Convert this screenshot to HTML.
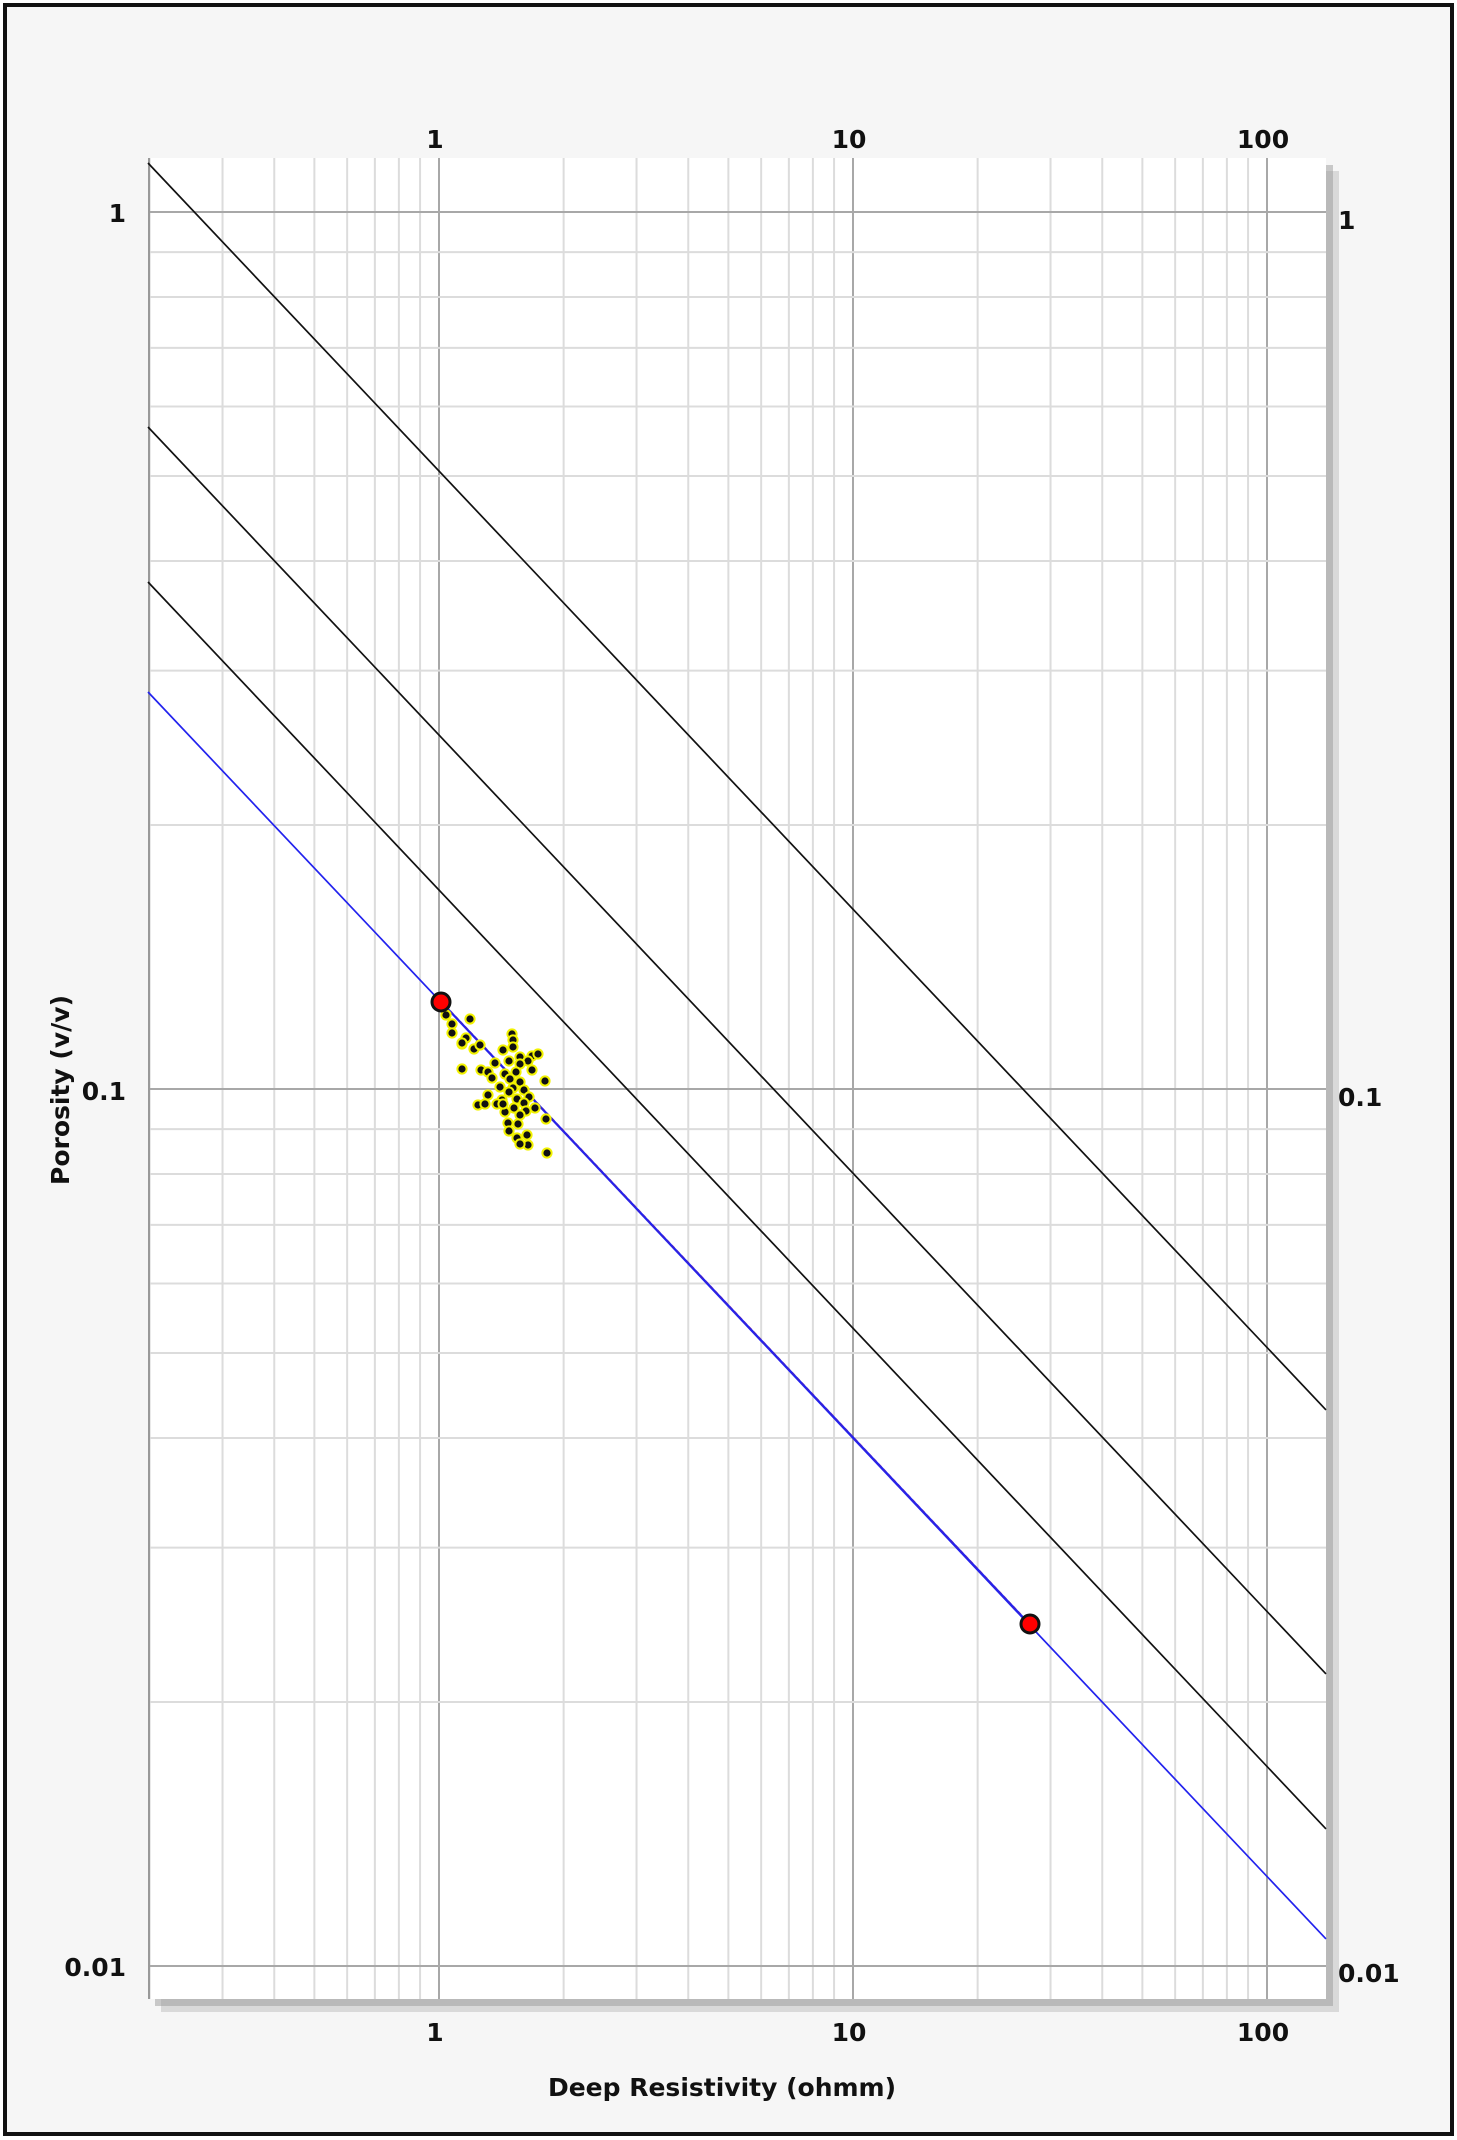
<!DOCTYPE html>
<html><head><meta charset="utf-8"><style>
html,body{margin:0;padding:0;width:1457px;height:2140px;background:#fff;overflow:hidden}
svg{display:block}
text{font-family:"DejaVu Sans","Liberation Sans",sans-serif;font-weight:bold;fill:#111}
</style></head><body>
<svg id="s" width="1457" height="2140" xmlns="http://www.w3.org/2000/svg">
<rect x="5" y="5" width="1447" height="2129" fill="#f6f6f6" stroke="#111" stroke-width="4"/>
<rect x="161" y="171" width="1178" height="1841" fill="#bbb" opacity="0.5"/>
<rect x="155" y="165" width="1178" height="1841" fill="#999" opacity="0.5"/>
<rect x="148" y="158" width="1178" height="1841" fill="#fff"/>
<g id="grid"></g>
<g id="lines"></g>
<text x="435" y="148" font-size="25" text-anchor="middle">1</text>
<text x="849" y="148" font-size="25" text-anchor="middle">10</text>
<text x="1263" y="148" font-size="25" text-anchor="middle">100</text>
<text x="435" y="2041" font-size="25" text-anchor="middle">1</text>
<text x="849" y="2041" font-size="25" text-anchor="middle">10</text>
<text x="1263" y="2041" font-size="25" text-anchor="middle">100</text>
<text x="126" y="222" font-size="25" text-anchor="end">1</text>
<text x="126" y="1100" font-size="25" text-anchor="end">0.1</text>
<text x="126" y="1976" font-size="25" text-anchor="end">0.01</text>
<text x="1338" y="229" font-size="25">1</text>
<text x="1338" y="1106" font-size="25">0.1</text>
<text x="1338" y="1982" font-size="25">0.01</text>
<text x="722" y="2096" font-size="25" text-anchor="middle">Deep Resistivity (ohmm)</text>
<text transform="translate(69,1090) rotate(-90)" font-size="25" text-anchor="middle">Porosity (v/v)</text>
</svg>
<script>
var NS="http://www.w3.org/2000/svg";
function el(p,t,a){var e=document.createElementNS(NS,t);for(var k in a)e.setAttribute(k,a[k]);p.appendChild(e);return e;}
var g=document.getElementById('grid'),L=document.getElementById('lines');
var X0=439,DX=414,Y0=212,DY=877,l=148,r=1326,t=158,b=1999;
function px(v){return X0+Math.log10(v)*DX}
function py(v){return Y0-Math.log10(v)*DY}
[0.1,1,10,100].forEach(function(d){for(var i=1;i<10;i++){var x=px(d*i);if(x<l||x>r)continue;
el(g,'line',{x1:x,x2:x,y1:t,y2:b,stroke:i==1?'#a8a8a8':'#dcdcdc','stroke-width':2});}});
[0.01,0.1,1].forEach(function(d){for(var i=1;i<10;i++){var y=py(d*i);if(y<t||y>b)continue;
el(g,'line',{x1:l,x2:r,y1:y,y2:y,stroke:i==1?'#a8a8a8':'#dcdcdc','stroke-width':2});}});
el(g,'line',{x1:l+1,x2:l+1,y1:t,y2:b,stroke:'#999','stroke-width':2});
var s=1.0585;
[[163,'#111'],[427,'#111'],[582,'#111'],[692,'#2222ee']].forEach(function(a){
el(L,'line',{x1:l,y1:a[0],x2:r,y2:a[0]+s*(r-l),stroke:a[1],'stroke-width':1.7});});
el(L,'line',{x1:441,y1:1001,x2:1030,y2:1624,stroke:'#d22','stroke-width':1.5,'stroke-dasharray':'4 3',opacity:0.7});
el(L,'line',{x1:441,y1:1001,x2:1030,y2:1624,stroke:'#2222ee','stroke-width':1.2});
var pts=[[446,1015],[452,1024],[470,1019],[452,1033],[466,1038],[462,1044],[474,1049],[480,1045],[462,1043],[512,1034],[513,1040],[513,1047],[503,1050],[520,1057],[532,1056],[538,1054],[528,1061],[520,1064],[509,1061],[495,1063],[481,1070],[462,1069],[488,1072],[505,1074],[516,1072],[532,1070],[492,1078],[500,1087],[510,1079],[520,1082],[545,1081],[488,1095],[502,1100],[513,1088],[524,1090],[529,1097],[517,1099],[509,1092],[497,1104],[505,1112],[514,1108],[524,1103],[478,1105],[485,1104],[503,1104],[526,1111],[535,1108],[520,1115],[518,1124],[508,1123],[546,1119],[509,1131],[517,1138],[527,1135],[528,1145],[520,1144],[547,1153]];
pts.forEach(function(p){el(L,'circle',{cx:p[0],cy:p[1],r:4.6,fill:'#111',stroke:'#f2f200','stroke-width':2});});
el(L,'circle',{cx:441,cy:1002,r:9,fill:'#f00',stroke:'#111','stroke-width':3});
el(L,'circle',{cx:1030,cy:1624,r:9,fill:'#f00',stroke:'#111','stroke-width':3});
</script>
</body></html>
